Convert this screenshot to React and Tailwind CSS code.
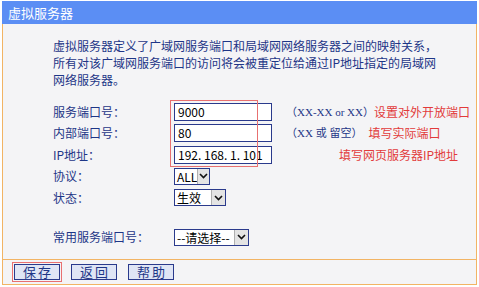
import React from 'react';

const FONT = { fontFamily: '"Noto Sans CJK SC", "Liberation Sans", sans-serif' };
const SERIF = { fontFamily: '"Liberation Serif", "Noto Sans CJK SC", serif' };

const Chevron = () => (
  <svg width="9" height="6" viewBox="0 0 9 6" fill="none">
    <path d="M1 1l3.5 3.5L8 1" stroke="#111" strokeWidth="1.6" />
  </svg>
);

const Select = ({ value, width }) => (
  <div className={`flex h-[17px] border border-[#2a3a8c] bg-white ${width}`}>
    <span className="flex-1 pl-[2px] text-[12px] leading-[15px] text-black whitespace-nowrap">{value}</span>
    <span className="w-[14px] flex items-center justify-center bg-[#e4e4e4] border-l border-[#b0b0b0]">
      <Chevron />
    </span>
  </div>
);

const TextInput = ({ value }) => (
  <div className="w-[98px] h-[18px] border border-[#2a3a8c] bg-white pl-[3px] text-[12px] leading-[16px] text-black whitespace-pre">
    {value}
  </div>
);

const Row = ({ label, children }) => (
  <div className="flex items-center h-[21.5px]">
    <div className="w-[121px] text-[12px] text-[#1e3687]">{label}</div>
    {children}
  </div>
);

const Btn = ({ chars, active }) => (
  <div className={active ? 'border border-[#e87070] p-[1px]' : 'p-[2px]'}>
    <div className="w-[46px] h-[16px] px-[8px] flex items-center justify-between border border-[#2a3a8c] bg-[#dfe5f5] text-[13px] text-[#1e3687]">
      <span>{chars[0]}</span>
      <span>{chars[1]}</span>
    </div>
  </div>
);

export default function App() {
  return (
    <div className="w-[479px] h-[287px] bg-white" style={FONT}>
      <div className="ml-[2px] pt-[1px] w-[475px]">
        <div className="h-[23px] bg-[#5b8ef4] flex items-center pl-[6px] text-[13px] text-white">
          虚拟服务器
        </div>
        <div className="relative h-[236px] bg-[#f4f4f6] border-x border-b border-[#f2b464]">
          <p className="pt-[13px] pl-[50px] text-[12px] leading-[17px] text-[#1e3687]">
            虚拟服务器定义了广域网服务端口和局域网网络服务器之间的映射关系，<br />
            所有对该广域网服务端口的访问将会被重定位给通过IP地址指定的局域网<br />
            网络服务器。
          </p>
          <div className="mt-[13px] pl-[50px] flex flex-col">
            <Row label="服务端口号：">
              <TextInput value="9000" />
              <span className="ml-[14px] text-[11px] text-[#1e3687] whitespace-nowrap" style={SERIF}>
                （XX-XX or XX）
              </span>
              <span className="text-[12px] text-[#e23b3b] whitespace-nowrap">设置对外开放端口</span>
            </Row>
            <Row label="内部端口号：">
              <TextInput value="80" />
              <span className="ml-[14px] text-[11px] text-[#1e3687] whitespace-nowrap" style={SERIF}>
                （XX 或 留空）
              </span>
              <span className="ml-[6px] text-[12px] text-[#e23b3b] whitespace-nowrap">填写实际端口</span>
            </Row>
            <Row label="IP地址：">
              <TextInput value="192. 168. 1. 101" />
              <span className="ml-[67px] text-[12px] text-[#e23b3b] whitespace-nowrap">填写网页服务器IP地址</span>
            </Row>
            <Row label="协议：">
              <Select value="ALL" width="w-[36px]" />
            </Row>
            <Row label="状态：">
              <Select value="生效" width="w-[52px]" />
            </Row>
            <div className="mt-[18px]">
              <Row label="常用服务端口号：">
                <Select value="--请选择--" width="w-[75px]" />
              </Row>
            </div>
          </div>
          <div className="absolute left-[167px] top-[76px] w-[88px] h-[67px] border border-[#e87070]" />
        </div>
        <div className="h-[25px] bg-[#f4f4f6] border-x border-b border-[#f2b464] flex items-center gap-[7px] pl-[9px]">
          <Btn chars="保存" active />
          <Btn chars="返回" />
          <Btn chars="帮助" />
        </div>
      </div>
    </div>
  );
}
